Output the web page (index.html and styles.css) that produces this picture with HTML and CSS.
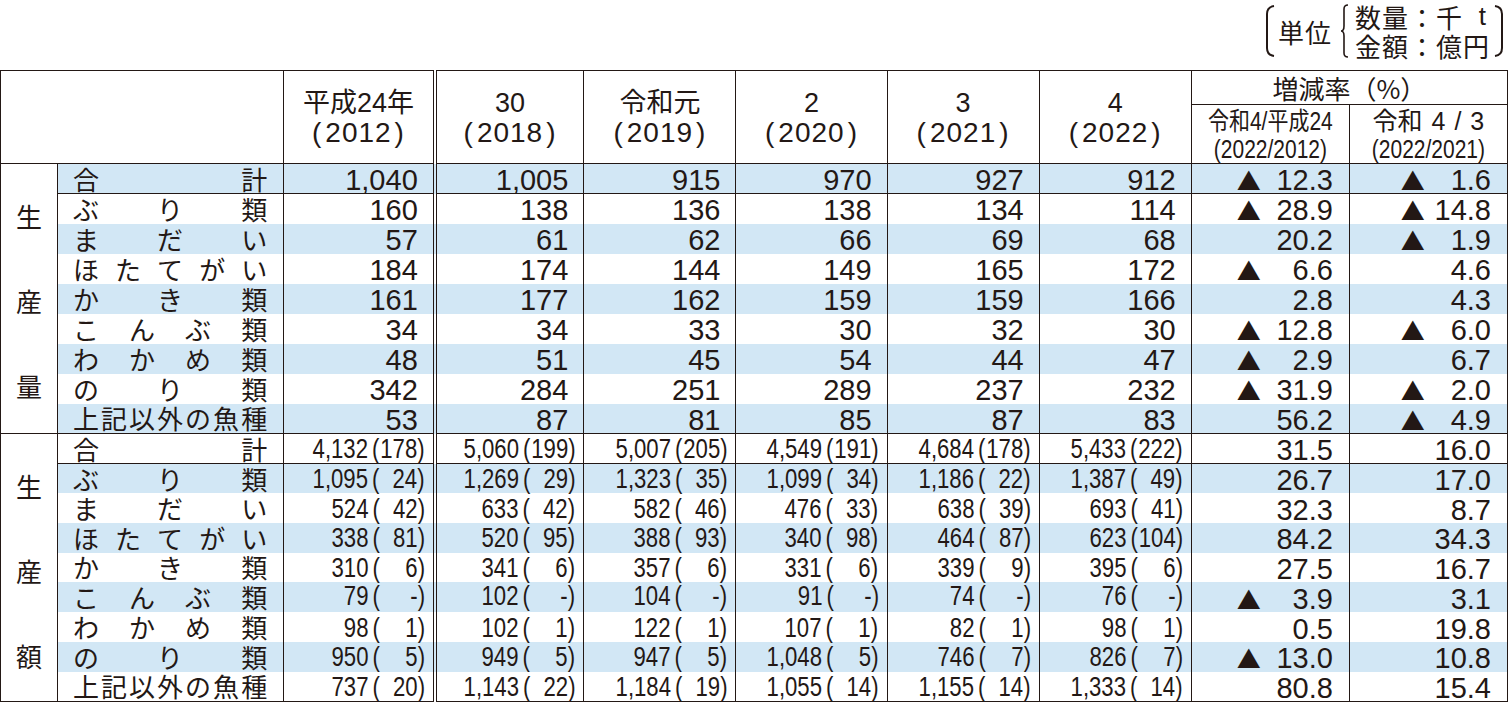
FILE: index.html
```html
<!DOCTYPE html>
<html lang="ja">
<head>
<meta charset="utf-8">
<title>養殖業生産量・生産額</title>
<link rel="stylesheet" href="styles.css">
</head>
<body>
<div class="page">
  <div class="unit">
    <svg class="brk" width="10" height="52" viewBox="0 0 10 52"><path d="M9,1 Q2,2 2,9 L2,43 Q2,50 9,51" fill="none" stroke="#231815" stroke-width="2"/></svg>
    <span class="unit-title">単位</span>
    <svg class="brace" width="9" height="54" viewBox="0 0 9 54"><path d="M8,1 Q4,1 4,5 L4,22 Q4,27 1,27 Q4,27 4,32 L4,49 Q4,53 8,53" fill="none" stroke="#231815" stroke-width="1.6"/></svg>
    <div class="unit-lines">
      <div class="ul"><span>数量</span><span>：</span><span>千</span><span class="t">t</span></div>
      <div class="ul"><span>金額</span><span>：</span><span>億円</span></div>
    </div>
    <svg class="brk" width="10" height="52" viewBox="0 0 10 52"><path d="M1,1 Q8,2 8,9 L8,43 Q8,50 1,51" fill="none" stroke="#231815" stroke-width="2"/></svg>
  </div>

  <table class="tbl">
    <colgroup>
      <col class="w-cat"><col class="w-item"><col class="w-y1"><col class="w-y2"><col class="w-y3"><col class="w-y4"><col class="w-y5"><col class="w-y6"><col class="w-r"><col class="w-r">
    </colgroup>
    <thead>
      <tr class="h1">
        <th class="corner" colspan="2" rowspan="2"></th>
        <th class="yr dbl" rowspan="2">平成24年<br><span class="yp"><span class="pa">(</span>2012<span class="pa">)</span></span></th>
        <th class="yr" rowspan="2">30<br><span class="yp"><span class="pa">(</span>2018<span class="pa">)</span></span></th>
        <th class="yr" rowspan="2">令和元<br><span class="yp"><span class="pa">(</span>2019<span class="pa">)</span></span></th>
        <th class="yr" rowspan="2">2<br><span class="yp"><span class="pa">(</span>2020<span class="pa">)</span></span></th>
        <th class="yr" rowspan="2">3<br><span class="yp"><span class="pa">(</span>2021<span class="pa">)</span></span></th>
        <th class="yr" rowspan="2">4<br><span class="yp"><span class="pa">(</span>2022<span class="pa">)</span></span></th>
        <th class="rate" colspan="2">増減率（%）</th>
      </tr>
      <tr class="h2">
        <th class="sub"><span class="cond">令和4/平成24</span><br><span class="cond">(2022/2012)</span></th>
        <th class="sub"><span class="sp">令和 4 / 3</span><br><span class="cond">(2022/2021)</span></th>
      </tr>
    </thead>
    <tbody>
      <!-- 生産量 -->
      <tr class="r sh tot">
        <td class="cat" rowspan="9"><div class="catw"><span>生</span><span>産</span><span>量</span></div></td>
        <td class="item"><div class="dist"><span>合</span><span>計</span></div></td>
        <td class="q dbl">1,040</td><td class="q">1,005</td><td class="q">915</td><td class="q">970</td><td class="q">927</td><td class="q">912</td>
        <td class="p"><div class="pw p1"><span class="tri">▲</span><span>12.3</span></div></td>
        <td class="p"><div class="pw p2"><span class="tri">▲</span><span>1.6</span></div></td>
      </tr>
      <tr class="r">
        <td class="item"><div class="dist"><span>ぶ</span><span>り</span><span>類</span></div></td>
        <td class="q dbl">160</td><td class="q">138</td><td class="q">136</td><td class="q">138</td><td class="q">134</td><td class="q">114</td>
        <td class="p"><div class="pw p1"><span class="tri">▲</span><span>28.9</span></div></td>
        <td class="p"><div class="pw p2"><span class="tri">▲</span><span>14.8</span></div></td>
      </tr>
      <tr class="r sh">
        <td class="item"><div class="dist"><span>ま</span><span>だ</span><span>い</span></div></td>
        <td class="q dbl">57</td><td class="q">61</td><td class="q">62</td><td class="q">66</td><td class="q">69</td><td class="q">68</td>
        <td class="p"><div class="pw p1"><span></span><span>20.2</span></div></td>
        <td class="p"><div class="pw p2"><span class="tri">▲</span><span>1.9</span></div></td>
      </tr>
      <tr class="r">
        <td class="item"><div class="dist"><span>ほ</span><span>た</span><span>て</span><span>が</span><span>い</span></div></td>
        <td class="q dbl">184</td><td class="q">174</td><td class="q">144</td><td class="q">149</td><td class="q">165</td><td class="q">172</td>
        <td class="p"><div class="pw p1"><span class="tri">▲</span><span>6.6</span></div></td>
        <td class="p"><div class="pw p2"><span></span><span>4.6</span></div></td>
      </tr>
      <tr class="r sh">
        <td class="item"><div class="dist"><span>か</span><span>き</span><span>類</span></div></td>
        <td class="q dbl">161</td><td class="q">177</td><td class="q">162</td><td class="q">159</td><td class="q">159</td><td class="q">166</td>
        <td class="p"><div class="pw p1"><span></span><span>2.8</span></div></td>
        <td class="p"><div class="pw p2"><span></span><span>4.3</span></div></td>
      </tr>
      <tr class="r">
        <td class="item"><div class="dist"><span>こ</span><span>ん</span><span>ぶ</span><span>類</span></div></td>
        <td class="q dbl">34</td><td class="q">34</td><td class="q">33</td><td class="q">30</td><td class="q">32</td><td class="q">30</td>
        <td class="p"><div class="pw p1"><span class="tri">▲</span><span>12.8</span></div></td>
        <td class="p"><div class="pw p2"><span class="tri">▲</span><span>6.0</span></div></td>
      </tr>
      <tr class="r sh">
        <td class="item"><div class="dist"><span>わ</span><span>か</span><span>め</span><span>類</span></div></td>
        <td class="q dbl">48</td><td class="q">51</td><td class="q">45</td><td class="q">54</td><td class="q">44</td><td class="q">47</td>
        <td class="p"><div class="pw p1"><span class="tri">▲</span><span>2.9</span></div></td>
        <td class="p"><div class="pw p2"><span></span><span>6.7</span></div></td>
      </tr>
      <tr class="r">
        <td class="item"><div class="dist"><span>の</span><span>り</span><span>類</span></div></td>
        <td class="q dbl">342</td><td class="q">284</td><td class="q">251</td><td class="q">289</td><td class="q">237</td><td class="q">232</td>
        <td class="p"><div class="pw p1"><span class="tri">▲</span><span>31.9</span></div></td>
        <td class="p"><div class="pw p2"><span class="tri">▲</span><span>2.0</span></div></td>
      </tr>
      <tr class="r sh end">
        <td class="item"><div class="dist"><span>上</span><span>記</span><span>以</span><span>外</span><span>の</span><span>魚</span><span>種</span></div></td>
        <td class="q dbl">53</td><td class="q">87</td><td class="q">81</td><td class="q">85</td><td class="q">87</td><td class="q">83</td>
        <td class="p"><div class="pw p1"><span></span><span>56.2</span></div></td>
        <td class="p"><div class="pw p2"><span class="tri">▲</span><span>4.9</span></div></td>
      </tr>

      <!-- 生産額 -->
      <tr class="r tot s2">
        <td class="cat" rowspan="9"><div class="catw"><span>生</span><span>産</span><span>額</span></div></td>
        <td class="item"><div class="dist"><span>合</span><span>計</span></div></td>
        <td class="a dbl"><span class="g"><span class="v">4,132</span><span class="pl">(</span><span class="pi">178</span><span class="pr">)</span></span></td>
        <td class="a"><span class="g"><span class="v">5,060</span><span class="pl">(</span><span class="pi">199</span><span class="pr">)</span></span></td>
        <td class="a"><span class="g"><span class="v">5,007</span><span class="pl">(</span><span class="pi">205</span><span class="pr">)</span></span></td>
        <td class="a"><span class="g"><span class="v">4,549</span><span class="pl">(</span><span class="pi">191</span><span class="pr">)</span></span></td>
        <td class="a"><span class="g"><span class="v">4,684</span><span class="pl">(</span><span class="pi">178</span><span class="pr">)</span></span></td>
        <td class="a"><span class="g"><span class="v">5,433</span><span class="pl">(</span><span class="pi">222</span><span class="pr">)</span></span></td>
        <td class="p"><div class="pw p1"><span></span><span>31.5</span></div></td>
        <td class="p"><div class="pw p2"><span></span><span>16.0</span></div></td>
      </tr>
      <tr class="r sh s2">
        <td class="item"><div class="dist"><span>ぶ</span><span>り</span><span>類</span></div></td>
        <td class="a dbl"><span class="g"><span class="v">1,095</span><span class="pl">(</span><span class="pi">24</span><span class="pr">)</span></span></td>
        <td class="a"><span class="g"><span class="v">1,269</span><span class="pl">(</span><span class="pi">29</span><span class="pr">)</span></span></td>
        <td class="a"><span class="g"><span class="v">1,323</span><span class="pl">(</span><span class="pi">35</span><span class="pr">)</span></span></td>
        <td class="a"><span class="g"><span class="v">1,099</span><span class="pl">(</span><span class="pi">34</span><span class="pr">)</span></span></td>
        <td class="a"><span class="g"><span class="v">1,186</span><span class="pl">(</span><span class="pi">22</span><span class="pr">)</span></span></td>
        <td class="a"><span class="g"><span class="v">1,387</span><span class="pl">(</span><span class="pi">49</span><span class="pr">)</span></span></td>
        <td class="p"><div class="pw p1"><span></span><span>26.7</span></div></td>
        <td class="p"><div class="pw p2"><span></span><span>17.0</span></div></td>
      </tr>
      <tr class="r s2">
        <td class="item"><div class="dist"><span>ま</span><span>だ</span><span>い</span></div></td>
        <td class="a dbl"><span class="g"><span class="v">524</span><span class="pl">(</span><span class="pi">42</span><span class="pr">)</span></span></td>
        <td class="a"><span class="g"><span class="v">633</span><span class="pl">(</span><span class="pi">42</span><span class="pr">)</span></span></td>
        <td class="a"><span class="g"><span class="v">582</span><span class="pl">(</span><span class="pi">46</span><span class="pr">)</span></span></td>
        <td class="a"><span class="g"><span class="v">476</span><span class="pl">(</span><span class="pi">33</span><span class="pr">)</span></span></td>
        <td class="a"><span class="g"><span class="v">638</span><span class="pl">(</span><span class="pi">39</span><span class="pr">)</span></span></td>
        <td class="a"><span class="g"><span class="v">693</span><span class="pl">(</span><span class="pi">41</span><span class="pr">)</span></span></td>
        <td class="p"><div class="pw p1"><span></span><span>32.3</span></div></td>
        <td class="p"><div class="pw p2"><span></span><span>8.7</span></div></td>
      </tr>
      <tr class="r sh s2">
        <td class="item"><div class="dist"><span>ほ</span><span>た</span><span>て</span><span>が</span><span>い</span></div></td>
        <td class="a dbl"><span class="g"><span class="v">338</span><span class="pl">(</span><span class="pi">81</span><span class="pr">)</span></span></td>
        <td class="a"><span class="g"><span class="v">520</span><span class="pl">(</span><span class="pi">95</span><span class="pr">)</span></span></td>
        <td class="a"><span class="g"><span class="v">388</span><span class="pl">(</span><span class="pi">93</span><span class="pr">)</span></span></td>
        <td class="a"><span class="g"><span class="v">340</span><span class="pl">(</span><span class="pi">98</span><span class="pr">)</span></span></td>
        <td class="a"><span class="g"><span class="v">464</span><span class="pl">(</span><span class="pi">87</span><span class="pr">)</span></span></td>
        <td class="a"><span class="g"><span class="v">623</span><span class="pl">(</span><span class="pi">104</span><span class="pr">)</span></span></td>
        <td class="p"><div class="pw p1"><span></span><span>84.2</span></div></td>
        <td class="p"><div class="pw p2"><span></span><span>34.3</span></div></td>
      </tr>
      <tr class="r s2">
        <td class="item"><div class="dist"><span>か</span><span>き</span><span>類</span></div></td>
        <td class="a dbl"><span class="g"><span class="v">310</span><span class="pl">(</span><span class="pi">6</span><span class="pr">)</span></span></td>
        <td class="a"><span class="g"><span class="v">341</span><span class="pl">(</span><span class="pi">6</span><span class="pr">)</span></span></td>
        <td class="a"><span class="g"><span class="v">357</span><span class="pl">(</span><span class="pi">6</span><span class="pr">)</span></span></td>
        <td class="a"><span class="g"><span class="v">331</span><span class="pl">(</span><span class="pi">6</span><span class="pr">)</span></span></td>
        <td class="a"><span class="g"><span class="v">339</span><span class="pl">(</span><span class="pi">9</span><span class="pr">)</span></span></td>
        <td class="a"><span class="g"><span class="v">395</span><span class="pl">(</span><span class="pi">6</span><span class="pr">)</span></span></td>
        <td class="p"><div class="pw p1"><span></span><span>27.5</span></div></td>
        <td class="p"><div class="pw p2"><span></span><span>16.7</span></div></td>
      </tr>
      <tr class="r sh s2">
        <td class="item"><div class="dist"><span>こ</span><span>ん</span><span>ぶ</span><span>類</span></div></td>
        <td class="a dbl"><span class="g"><span class="v">79</span><span class="pl">(</span><span class="pi"><span class="dash">-</span></span><span class="pr">)</span></span></td>
        <td class="a"><span class="g"><span class="v">102</span><span class="pl">(</span><span class="pi"><span class="dash">-</span></span><span class="pr">)</span></span></td>
        <td class="a"><span class="g"><span class="v">104</span><span class="pl">(</span><span class="pi"><span class="dash">-</span></span><span class="pr">)</span></span></td>
        <td class="a"><span class="g"><span class="v">91</span><span class="pl">(</span><span class="pi"><span class="dash">-</span></span><span class="pr">)</span></span></td>
        <td class="a"><span class="g"><span class="v">74</span><span class="pl">(</span><span class="pi"><span class="dash">-</span></span><span class="pr">)</span></span></td>
        <td class="a"><span class="g"><span class="v">76</span><span class="pl">(</span><span class="pi"><span class="dash">-</span></span><span class="pr">)</span></span></td>
        <td class="p"><div class="pw p1"><span class="tri">▲</span><span>3.9</span></div></td>
        <td class="p"><div class="pw p2"><span></span><span>3.1</span></div></td>
      </tr>
      <tr class="r s2">
        <td class="item"><div class="dist"><span>わ</span><span>か</span><span>め</span><span>類</span></div></td>
        <td class="a dbl"><span class="g"><span class="v">98</span><span class="pl">(</span><span class="pi">1</span><span class="pr">)</span></span></td>
        <td class="a"><span class="g"><span class="v">102</span><span class="pl">(</span><span class="pi">1</span><span class="pr">)</span></span></td>
        <td class="a"><span class="g"><span class="v">122</span><span class="pl">(</span><span class="pi">1</span><span class="pr">)</span></span></td>
        <td class="a"><span class="g"><span class="v">107</span><span class="pl">(</span><span class="pi">1</span><span class="pr">)</span></span></td>
        <td class="a"><span class="g"><span class="v">82</span><span class="pl">(</span><span class="pi">1</span><span class="pr">)</span></span></td>
        <td class="a"><span class="g"><span class="v">98</span><span class="pl">(</span><span class="pi">1</span><span class="pr">)</span></span></td>
        <td class="p"><div class="pw p1"><span></span><span>0.5</span></div></td>
        <td class="p"><div class="pw p2"><span></span><span>19.8</span></div></td>
      </tr>
      <tr class="r sh s2">
        <td class="item"><div class="dist"><span>の</span><span>り</span><span>類</span></div></td>
        <td class="a dbl"><span class="g"><span class="v">950</span><span class="pl">(</span><span class="pi">5</span><span class="pr">)</span></span></td>
        <td class="a"><span class="g"><span class="v">949</span><span class="pl">(</span><span class="pi">5</span><span class="pr">)</span></span></td>
        <td class="a"><span class="g"><span class="v">947</span><span class="pl">(</span><span class="pi">5</span><span class="pr">)</span></span></td>
        <td class="a"><span class="g"><span class="v">1,048</span><span class="pl">(</span><span class="pi">5</span><span class="pr">)</span></span></td>
        <td class="a"><span class="g"><span class="v">746</span><span class="pl">(</span><span class="pi">7</span><span class="pr">)</span></span></td>
        <td class="a"><span class="g"><span class="v">826</span><span class="pl">(</span><span class="pi">7</span><span class="pr">)</span></span></td>
        <td class="p"><div class="pw p1"><span class="tri">▲</span><span>13.0</span></div></td>
        <td class="p"><div class="pw p2"><span></span><span>10.8</span></div></td>
      </tr>
      <tr class="r s2 last">
        <td class="item"><div class="dist"><span>上</span><span>記</span><span>以</span><span>外</span><span>の</span><span>魚</span><span>種</span></div></td>
        <td class="a dbl"><span class="g"><span class="v">737</span><span class="pl">(</span><span class="pi">20</span><span class="pr">)</span></span></td>
        <td class="a"><span class="g"><span class="v">1,143</span><span class="pl">(</span><span class="pi">22</span><span class="pr">)</span></span></td>
        <td class="a"><span class="g"><span class="v">1,184</span><span class="pl">(</span><span class="pi">19</span><span class="pr">)</span></span></td>
        <td class="a"><span class="g"><span class="v">1,055</span><span class="pl">(</span><span class="pi">14</span><span class="pr">)</span></span></td>
        <td class="a"><span class="g"><span class="v">1,155</span><span class="pl">(</span><span class="pi">14</span><span class="pr">)</span></span></td>
        <td class="a"><span class="g"><span class="v">1,333</span><span class="pl">(</span><span class="pi">14</span><span class="pr">)</span></span></td>
        <td class="p"><div class="pw p1"><span></span><span>80.8</span></div></td>
        <td class="p"><div class="pw p2"><span></span><span>15.4</span></div></td>
      </tr>
    </tbody>
  </table>
</div>
</body>
</html>
```

FILE: styles.css
```css
html, body {
  margin: 0;
  padding: 0;
  background: #ffffff;
}

body {
  color: #231815;
  font-family: "Liberation Sans", "Noto Sans CJK JP", sans-serif;
}

.page {
  width: 1510px;
}

/* unit label */
.unit {
  display: flex;
  justify-content: flex-end;
  align-items: center;
  height: 62px;
  margin-bottom: 8px;
  padding-right: 6px;
  box-sizing: border-box;
  font-family: "Noto Sans CJK JP", sans-serif;
  font-size: 26px;
  line-height: 29px;
}

.unit-title {
  margin: 0 8px 0 3px;
  letter-spacing: 1px;
}

.brace {
  margin-right: 6px;
}

.unit-lines {
  display: flex;
  flex-direction: column;
  margin-right: 4px;
}

.ul {
  display: flex;
  letter-spacing: 1px;
}

.ul .t {
  width: 27px;
  text-align: right;
  font-family: "Liberation Sans", sans-serif;
  padding-right: 3px;
  box-sizing: border-box;
}

/* table */
.tbl {
  border-collapse: collapse;
  table-layout: fixed;
  width: 1508px;
  border-top: 1px solid #231815;
  border-left: 1px solid #231815;
  border-right: 1px solid #231815;
}

.w-cat { width: 57px; }
.w-item { width: 226px; }
.w-y1 { width: 151px; }
.w-y2 { width: 149px; }
.w-y3 { width: 152px; }
.w-y4 { width: 151px; }
.w-y5 { width: 152px; }
.w-y6 { width: 152px; }
.w-r { width: 158px; }

th, td {
  padding: 0;
  border-left: 1px solid #231815;
  border-right: 1px solid #231815;
  white-space: nowrap;
}

th {
  font-weight: normal;
  text-align: center;
  vertical-align: middle;
  border-bottom: 1px solid #231815;
}

.dbl {
  border-right: 4px double #231815;
}

.h1 { height: 34px; }
.h2 { height: 59px; }

.yr {
  font-size: 27px;
  line-height: 29px;
  padding-top: 2px;
}

.yp {
  font-size: 28px;
  letter-spacing: 1px;
}

.pa {
  margin: 0 3px;
}

.rate {
  font-family: "Noto Sans CJK JP", sans-serif;
  font-size: 26px;
  line-height: 30px;
}

.sub {
  font-size: 25px;
  line-height: 28px;
  padding-top: 2px;
}

.cond {
  display: inline-block;
  transform: scaleX(0.84);
  transform-origin: center;
  margin: 0 -12px;
}

.sp {
  word-spacing: 2px;
}

/* body rows */
.r { height: 30px; }
.r.s2 { height: 29.7px; }

.r td {
  vertical-align: middle;
}

.r.sh td {
  background: #d2e7f5;
}

.r td.cat {
  background: #ffffff;
  vertical-align: top;
  padding-top: 39px;
  font-family: "Noto Sans CJK JP", sans-serif;
  font-size: 26px;
  line-height: 26px;
  border-bottom: 1px solid #231815;
}

.catw {
  display: flex;
  flex-direction: column;
  justify-content: space-between;
  align-items: center;
  height: 196px;
}

.tot td { border-bottom: 1px solid #231815; }
.end td { border-bottom: 1px solid #231815; }
.last td { border-bottom: 1px solid #231815; }

.item {
  font-family: "Noto Sans CJK JP", sans-serif;
  font-size: 26px;
  line-height: 26px;
}

.dist {
  display: flex;
  justify-content: space-between;
  padding: 0 16px 0 15px;
}

.q {
  font-size: 29px;
  line-height: 26px;
  padding: 3px 15px 0 0;
  text-align: right;
}

.a {
  font-size: 27px;
  line-height: 26px;
  padding-top: 1px;
  text-align: right;
  padding-right: 8px;
}

.g {
  display: inline-flex;
  transform: scaleX(0.82);
  transform-origin: right center;
}

.pl { margin-left: 5px; }

.pi {
  display: inline-block;
  width: 45px;
  margin-left: 1px;
  text-align: right;
}

.dash {
  vertical-align: 3px;
}

.p {
  font-size: 29px;
  line-height: 26px;
  padding-top: 3px;
}

.pw {
  display: flex;
  justify-content: space-between;
  align-items: baseline;
  padding-right: 16px;
}

.p1 { padding-left: 45px; }
.p2 { padding-left: 51px; }

.tri {
  font-family: "Noto Sans CJK JP", sans-serif;
  font-size: 24px;
  line-height: 20px;
}
```
